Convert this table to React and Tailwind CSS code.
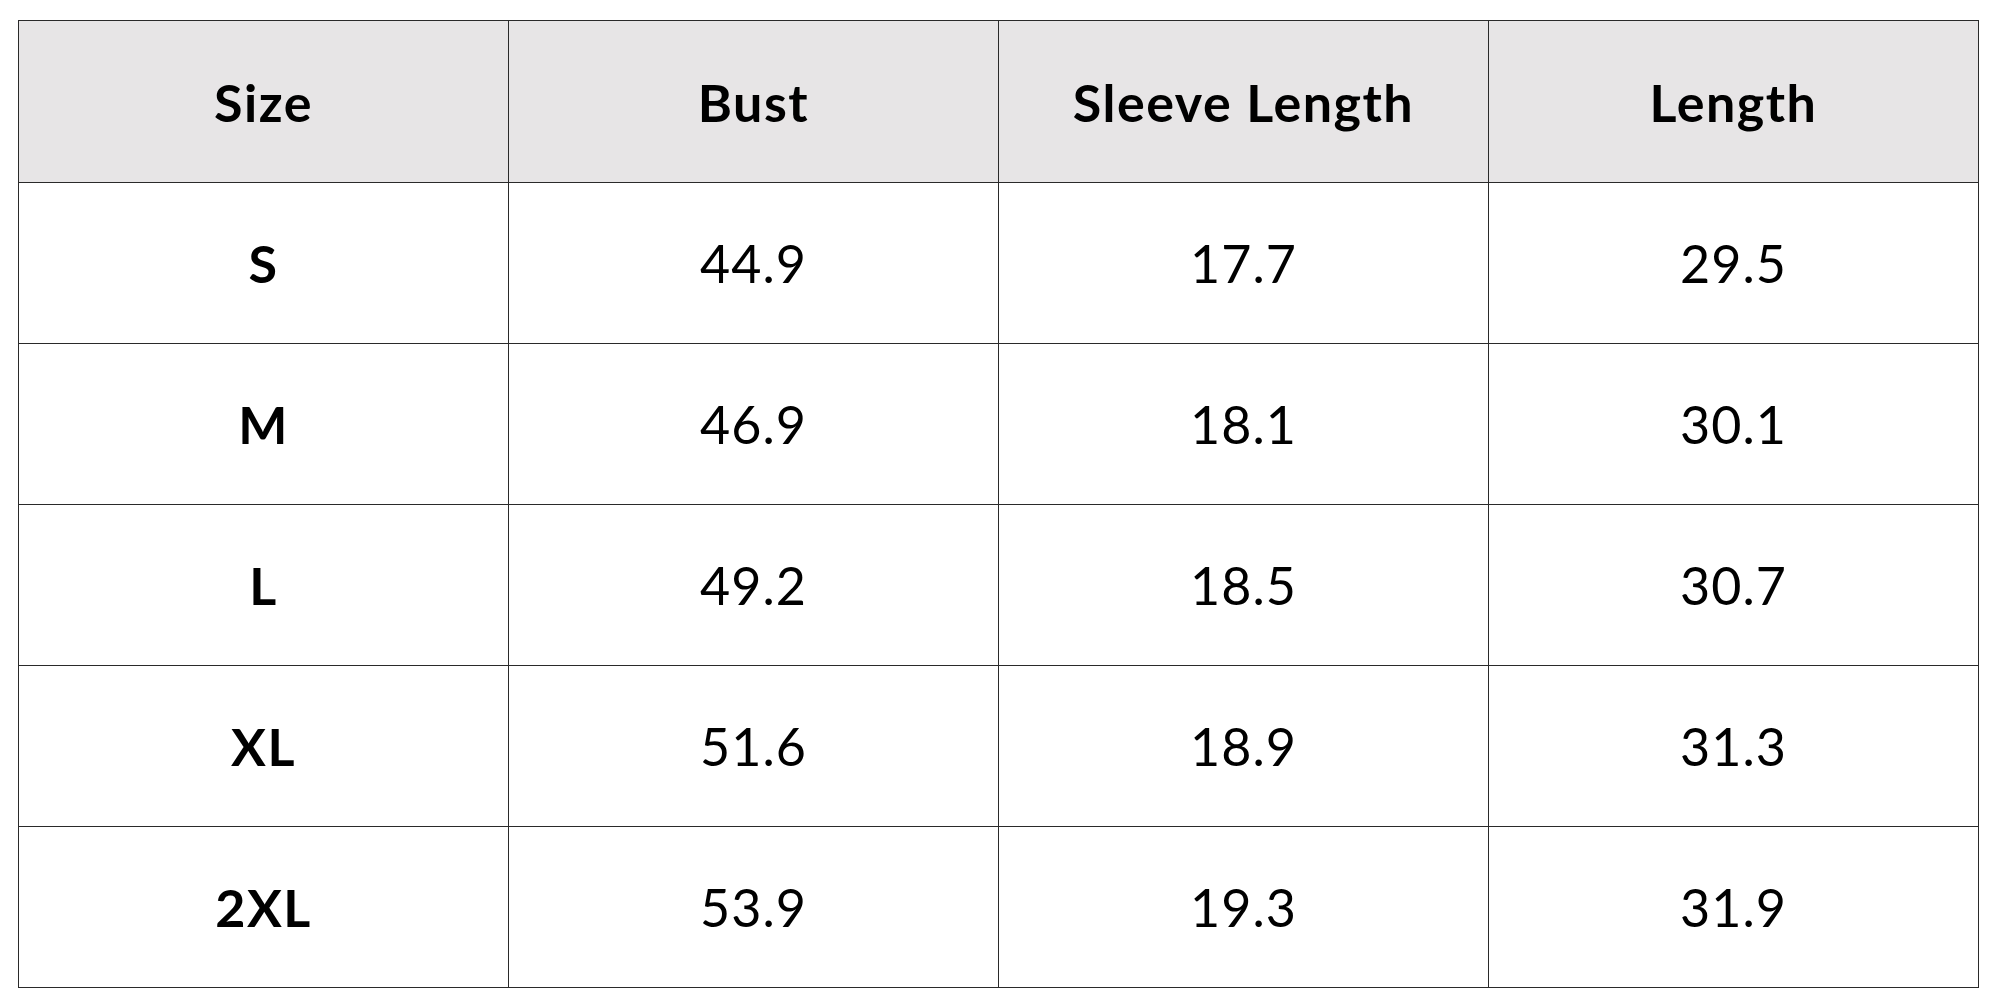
const headers = ["Size", "Bust", "Sleeve Length", "Length"];

const rows = [
  ["S", "44.9", "17.7", "29.5"],
  ["M", "46.9", "18.1", "30.1"],
  ["L", "49.2", "18.5", "30.7"],
  ["XL", "51.6", "18.9", "31.3"],
  ["2XL", "53.9", "19.3", "31.9"],
];

export default function App() {
  return (
    <div className="w-[2000px] h-[1000px] bg-white pt-[20px] pl-[18px] font-['Lato',sans-serif] text-black">
      <table className="w-[1961px] border-collapse table-fixed">
        <thead>
          <tr className="h-[162px] bg-[#e7e5e6]">
            {headers.map((h) => (
              <th key={h} className="border border-[#2a2a2a] text-[52px] tracking-[1.5px] font-bold text-center align-middle">
                {h}
              </th>
            ))}
          </tr>
        </thead>
        <tbody>
          {rows.map((r) => (
            <tr key={r[0]} className="h-[161px]">
              {r.map((c, i) => (
                <td
                  key={i}
                  className={
                    "border border-[#2a2a2a] text-[52px] text-center align-middle " +
                    (i === 0 ? "font-bold tracking-[1.5px]" : "font-normal tracking-[1px]")
                  }
                >
                  {c}
                </td>
              ))}
            </tr>
          ))}
        </tbody>
      </table>
    </div>
  );
}
